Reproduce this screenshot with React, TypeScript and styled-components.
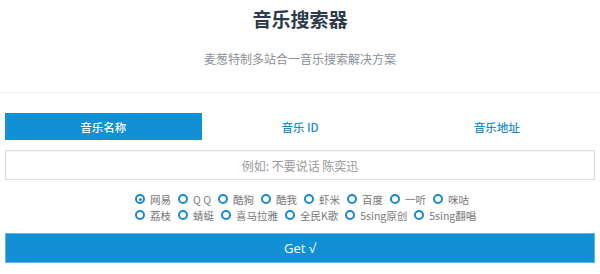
import { useState } from "react";
import styled, { createGlobalStyle } from "styled-components";

const tabs = ["音乐名称", "音乐 ID", "音乐地址"];

const siteRows = [
  ["网易", "QQ", "酷狗", "酷我", "虾米", "百度", "一听", "咪咕"],
  ["荔枝", "蜻蜓", "喜马拉雅", "全民K歌", "5sing原创", "5sing翻唱"],
];

const App = () => {
  const [tab, setTab] = useState(0);
  const [site, setSite] = useState("网易");

  return (
    <>
      <GlobalStyle />
      <S.Header>
        <S.Title>音乐搜索器</S.Title>
        <S.Subtitle>麦葱特制多站合一音乐搜索解决方案</S.Subtitle>
      </S.Header>
      <S.Main>
        <S.Tabs>
          {tabs.map((t, i) => (
            <S.Tab key={t} $active={i === tab} onClick={() => setTab(i)}>
              {t}
            </S.Tab>
          ))}
        </S.Tabs>
        <S.Input placeholder="例如: 不要说话 陈奕迅" />
        <S.Radios>
          {siteRows.map((row, r) => (
            <S.RadioRow key={r}>
              {row.map((s) => (
                <S.RadioItem key={s} onClick={() => setSite(s)}>
                  <S.Circle $checked={s === site} />
                  <S.Label>{s === "QQ" ? "Q Q" : s}</S.Label>
                </S.RadioItem>
              ))}
            </S.RadioRow>
          ))}
        </S.Radios>
        <S.Button>Get √</S.Button>
      </S.Main>
    </>
  );
};

const GlobalStyle = createGlobalStyle`
  body {
    margin: 0;
    background: #fff;
    font-family: "Noto Sans CJK SC", "Noto Sans", sans-serif;
  }
`;

const blue = "#1190d6";

const S = {
  Header: styled.div`
    text-align: center;
    padding-bottom: 24px;
    border-bottom: 1px solid #eeeeee;
  `,
  Title: styled.h1`
    margin: 0;
    font-size: 19px;
    line-height: 38px;
    font-weight: 700;
    color: #2c3a4a;
  `,
  Subtitle: styled.p`
    margin: 12px 0 0;
    font-size: 12px;
    line-height: 18px;
    color: #8a8f94;
  `,
  Main: styled.div`
    width: 590px;
    margin: 0 5px;
    padding-top: 20px;
  `,
  Tabs: styled.div`
    display: grid;
    grid-template-columns: repeat(3, 1fr);
    height: 27px;
  `,
  Tab: styled.div<{ $active: boolean }>`
    display: flex;
    align-items: center;
    justify-content: center;
    font-size: 11.5px;
    font-weight: 500;
    cursor: pointer;
    background: ${({ $active }) => ($active ? blue : "transparent")};
    color: ${({ $active }) => ($active ? "#ffffff" : "#1b8bcc")};
  `,
  Input: styled.input`
    display: block;
    box-sizing: border-box;
    width: 100%;
    height: 30px;
    margin-top: 10px;
    border: 1px solid #dddddd;
    box-shadow: inset 0 1px 1px rgba(0, 0, 0, 0.04);
    outline: none;
    text-align: center;
    font-family: inherit;
    font-size: 12px;
    color: #555;
    &::placeholder {
      color: #999999;
    }
  `,
  Radios: styled.div`
    width: 340px;
    margin: 11px auto 0;
    padding-left: 10px;
  `,
  RadioRow: styled.div`
    display: flex;
  `,
  RadioItem: styled.label`
    display: flex;
    align-items: center;
    height: 16px;
    margin-right: 7px;
    cursor: pointer;
  `,
  Circle: styled.span<{ $checked: boolean }>`
    position: relative;
    box-sizing: border-box;
    width: 10px;
    height: 10px;
    border: 2px solid #1a88cf;
    border-radius: 50%;
    margin-right: 5px;
    &::after {
      content: "";
      display: ${({ $checked }) => ($checked ? "block" : "none")};
      position: absolute;
      left: 50%;
      top: 50%;
      width: 3px;
      height: 3px;
      margin: -1.5px 0 0 -1.5px;
      border-radius: 50%;
      background: #1a88cf;
    }
  `,
  Label: styled.span`
    font-size: 10.5px;
    color: #777777;
    white-space: pre;
  `,
  Button: styled.button`
    display: block;
    width: 100%;
    height: 30px;
    margin-top: 10px;
    border: 1px solid #5fb4e4;
    background: ${blue};
    color: #ffffff;
    font-family: "Open Sans", "Noto Sans", sans-serif;
    font-size: 13px;
    cursor: pointer;
  `,
};

export default App;
